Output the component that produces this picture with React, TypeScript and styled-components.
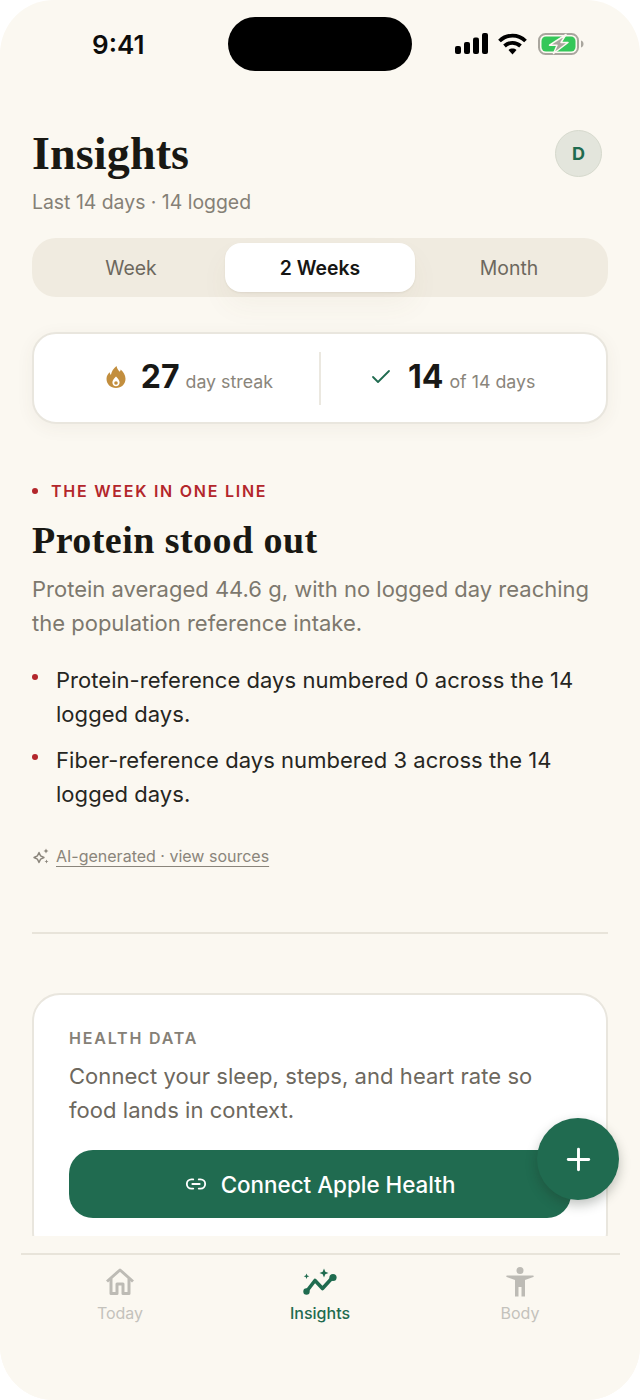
import React from 'react';
import styled, { createGlobalStyle } from 'styled-components';
import { Check, Link2, Plus } from 'lucide-react';

const GlobalStyle = createGlobalStyle`
  html, body {
    margin: 0;
    padding: 0;
    background: #fff;
  }
  * {
    box-sizing: border-box;
  }
`;

const Screen = styled.div`
  position: relative;
  width: 640px;
  height: 1400px;
  border-radius: 54px;
  overflow: hidden;
  background: #fbf8f1;
  display: flex;
  flex-direction: column;
  font-family: Inter, 'Liberation Sans', sans-serif;
  color: #1a1a18;
`;

const StatusBar = styled.div`
  flex: none;
  height: 71px;
  padding-top: 17px;
  display: grid;
  grid-template-columns: 228px 184px 228px;
`;

const Clock = styled.div`
  font-size: 26px;
  font-weight: 600;
  line-height: 56px;
  padding-left: 92px;
  color: #0c0c0b;
`;

const Island = styled.div`
  height: 54px;
  border-radius: 27px;
  background: #000;
`;

const StatusIcons = styled.div`
  display: flex;
  align-items: center;
  gap: 10px;
  padding-left: 43px;
  height: 54px;
`;

const Content = styled.div`
  flex: 1;
  min-height: 0;
  overflow: hidden;
  padding: 58px 32px 0;
`;

const Header = styled.div`
  display: flex;
  justify-content: space-between;
  align-items: flex-start;
`;

const Title = styled.h1`
  margin: 0;
  font-family: 'Liberation Serif', serif;
  font-size: 46px;
  line-height: 50px;
  font-weight: 700;
  letter-spacing: 0.15px;
  color: #191813;
`;

const Avatar = styled.div`
  width: 47px;
  height: 47px;
  margin: 1px 6px 0 0;
  border-radius: 50%;
  background: #e3e5dc;
  border: 1px solid #d6d9cd;
  color: #1f6b4f;
  font-size: 18px;
  font-weight: 700;
  display: flex;
  align-items: center;
  justify-content: center;
`;

const Subtitle = styled.div`
  margin-top: 9px;
  font-size: 19.4px;
  line-height: 28px;
  color: #858076;
`;

const Segments = styled.div`
  margin-top: 22px;
  height: 59px;
  padding: 5px;
  border-radius: 24px;
  background: #f0ebe0;
  display: grid;
  grid-template-columns: 1fr 190px 1fr;
`;

const Segment = styled.div<{ $active?: boolean }>`
  display: flex;
  align-items: center;
  justify-content: center;
  border-radius: 16px;
  font-size: 19.4px;
  font-weight: ${(p) => (p.$active ? 600 : 400)};
  color: ${(p) => (p.$active ? '#161614' : '#6d685e')};
  background: ${(p) => (p.$active ? '#fff' : 'transparent')};
  box-shadow: ${(p) => (p.$active ? '0 1px 2px rgba(60,50,30,.08), 0 14px 28px rgba(120,90,50,.05)' : 'none')};
`;

const StatsCard = styled.div`
  margin-top: 35px;
  height: 92px;
  background: #fff;
  border: 2px solid #e9e6de;
  border-radius: 24px;
  box-shadow: 0 4px 18px rgba(90, 75, 45, 0.06);
  display: grid;
  grid-template-columns: 1fr 2px 1fr;
  align-items: center;
`;

const Stat = styled.div<{ $side: 'left' | 'right' }>`
  display: flex;
  align-items: baseline;
  justify-content: ${(p) => (p.$side === 'left' ? 'flex-end' : 'flex-start')};
  padding: ${(p) => (p.$side === 'left' ? '0 46px 3px 0' : '0 0 3px 48px')};
  color: #8a857b;
  font-size: 17.8px;
`;

const StatIcon = styled.span`
  align-self: center;
  display: flex;
  margin-right: 15px;
`;

const StatNumber = styled.span`
  font-size: 32px;
  font-weight: 700;
  color: #181816;
  margin-right: 6px;
`;

const StatDivider = styled.div`
  height: 53px;
  background: #ebe8e0;
`;

const Eyebrow = styled.div`
  margin-top: 57px;
  display: flex;
  align-items: center;
  gap: 13px;
  height: 20px;
  font-size: 16px;
  font-weight: 600;
  letter-spacing: 1.75px;
  color: #b3262b;
  &::before {
    content: '';
    width: 6px;
    height: 6px;
    border-radius: 50%;
    background: #b3262b;
  }
`;

const Headline = styled.h2`
  margin: 17px 0 0;
  font-family: 'Liberation Serif', serif;
  font-size: 38px;
  line-height: 44px;
  font-weight: 700;
  letter-spacing: 0.45px;
  color: #191813;
`;

const Body = styled.p`
  margin: 10px 0 0;
  font-size: 22px;
  line-height: 34px;
  color: #7d786e;
`;

const Bullets = styled.ul`
  margin: 23px 0 0;
  padding: 0;
  list-style: none;
  display: flex;
  flex-direction: column;
  gap: 12px;
`;

const Bullet = styled.li`
  position: relative;
  padding-left: 24px;
  font-size: 22px;
  line-height: 34px;
  letter-spacing: 0.04px;
  color: #26261f;
  &::before {
    content: '';
    position: absolute;
    left: 0;
    top: 11px;
    width: 6px;
    height: 6px;
    border-radius: 50%;
    background: #b3262b;
  }
`;

const Sources = styled.div`
  margin-top: 33px;
  display: flex;
  align-items: center;
  gap: 6px;
  height: 24px;
  font-size: 16px;
  color: #8a857b;
  span {
    text-decoration: underline;
    text-underline-offset: 4px;
    text-decoration-thickness: 1px;
  }
`;

const Rule = styled.div`
  margin-top: 64px;
  height: 2px;
  background: #e8e4da;
`;

const HealthCard = styled.div`
  margin-top: 59px;
  padding: 31px 35px 40px;
  background: #fff;
  border: 2px solid #e9e6de;
  border-radius: 28px;
`;

const CardLabel = styled.div`
  font-size: 16px;
  line-height: 24px;
  font-weight: 600;
  letter-spacing: 1.8px;
  color: #858076;
`;

const CardText = styled.p`
  margin: 9px 0 0;
  font-size: 22px;
  line-height: 34px;
  letter-spacing: 0.05px;
  color: #6d685e;
`;

const ConnectButton = styled.div`
  margin-top: 23px;
  height: 68px;
  border-radius: 24px;
  background: #206b50;
  color: #fff;
  font-size: 22.4px;
  font-weight: 500;
  display: flex;
  align-items: center;
  justify-content: center;
  gap: 14px;
`;

const Fab = styled.div`
  position: absolute;
  left: 537px;
  top: 1118px;
  width: 82px;
  height: 82px;
  border-radius: 50%;
  background: #206b50;
  color: #fff;
  display: flex;
  align-items: center;
  justify-content: center;
  box-shadow: 0 5px 12px rgba(30, 40, 30, 0.28);
`;

const NavArea = styled.div`
  flex: none;
  height: 164px;
  padding: 17px 20px 0 21px;
  background: #fbf8f1;
`;

const Nav = styled.div`
  border-top: 2px solid #e8e4da;
  padding-top: 11px;
  display: grid;
  grid-template-columns: 198px 202px 198px;
`;

const NavItem = styled.div<{ $active?: boolean }>`
  display: flex;
  flex-direction: column;
  align-items: center;
  gap: 3px;
  font-size: 16px;
  line-height: 24px;
  font-weight: ${(p) => (p.$active ? 500 : 400)};
  color: ${(p) => (p.$active ? '#1f6b4f' : '#c4c2bc')};
`;

const NavIcon = styled.div`
  height: 32px;
  display: flex;
  align-items: center;
  justify-content: center;
`;

const Signal = () => (
  <svg width="33" height="22" viewBox="0 0 33 22" fill="#000">
    <rect x="0" y="13" width="6" height="8" rx="2" />
    <rect x="9" y="9" width="6" height="12" rx="2" />
    <rect x="18" y="4.500" width="6" height="16.500" rx="2" />
    <rect x="27" y="0" width="6" height="21" rx="2" />
  </svg>
);

const Wifi = () => (
  <svg width="29" height="22" viewBox="0 0 29 22" fill="none" stroke="#000" strokeWidth="3.800">
    <path d="M1.500 8C8.800 .8 20.200 .8 27.500 8" />
    <path d="M6.500 13c4.600-4.300 11.400-4.300 16 0" />
    <path d="M14.500 21.500l-4-4.600c2.300-1.800 5.700-1.800 8 0z" fill="#000" stroke="none" />
  </svg>
);

const Battery = () => (
  <svg width="47" height="22" viewBox="0 0 47 22">
    <rect x="2" y="1" width="39" height="20" rx="6.500" fill="none" stroke="#a9a69e" strokeWidth="2" />
    <rect x="4.500" y="3.500" width="34" height="15" rx="4.500" fill="#34c759" />
    <path d="M44 7.500c1.600.5 2.500 1.800 2.500 3.500s-.9 3-2.500 3.500z" fill="#a9a69e" />
    <path d="M29 1.500L12.500 12.200h7.500L16.500 20.500 31 9.500h-7z" fill="#a9a69e" stroke="#fbf8f1" strokeWidth="1.500" strokeLinejoin="round" />
  </svg>
);

const Flame = () => (
  <svg width="20" height="24" viewBox="0 0 20 24">
    <path
      fillRule="evenodd"
      d="M10.500 1c.6 3.200 2 4.400 3.300 5.800.5-.7.8-1.400.9-2.300 2.800 2.500 4.800 5.800 4.800 9.300C19.500 19.300 15.400 23 10 23S.5 19.300.5 13.800c0-3 1.600-5 3.200-6.600.1 1.200.5 2 1.200 2.700C5.500 6.600 7.500 3.400 10.500 1zM10 11.500c-2 2.200-3.600 4-3.600 6 0 2.100 1.600 3.700 3.600 3.700s3.600-1.600 3.600-3.700c0-2-1.600-3.800-3.600-6z"
      fill="#c28e3e"
    />
    <circle cx="10" cy="18" r="1.800" fill="#c28e3e" />
  </svg>
);

const Sparkle = () => (
  <svg width="18" height="18" viewBox="0 0 18 18" fill="none" stroke="#8a857b" strokeWidth="1.400" strokeLinejoin="round">
    <path d="M7 5.500l1.600 3.400L12 10.500l-3.400 1.600L7 15.500l-1.600-3.400L2 10.500l3.400-1.600z" />
    <path d="M14 1.500l.8 1.700 1.700.8-1.700.8-.8 1.700-.8-1.700-1.700-.8 1.700-.8z" fill="#8a857b" stroke="none" />
    <path d="M14.500 12.500l.6 1.400 1.400.6-1.400.6-.6 1.400-.6-1.400-1.400-.6 1.400-.6z" fill="#8a857b" stroke="none" />
  </svg>
);

const HomeIcon = () => (
  <svg width="30" height="28" viewBox="0 0 30 28" fill="none" stroke="#bdbbb5" strokeWidth="3" strokeLinejoin="round">
    <path d="M2 13.500L15 2l13 11.500" />
    <path d="M6 10.500V25.500h6V16h6v9.500h6V10.500" />
  </svg>
);

const InsightsIcon = () => (
  <svg width="36" height="28" viewBox="0 0 36 28" fill="none">
    <path d="M4.500 23.500L13 12.500l7.500 8L31 9" stroke="#1f6b4f" strokeWidth="3.600" strokeLinecap="round" strokeLinejoin="round" />
    <circle cx="4.500" cy="23.500" r="3.200" fill="#1f6b4f" />
    <circle cx="31" cy="9.500" r="3.600" fill="#1f6b4f" />
    <path d="M22 0.500l1.300 3.200 3.200 1.300-3.200 1.300L22 9.500l-1.300-3.200L17.500 5l3.200-1.300z" fill="#1f6b4f" />
    <path d="M4.500 5.500l.8 2 2 .8-2 .8-.8 2-.8-2-2-.8 2-.8z" fill="#1f6b4f" />
  </svg>
);

const BodyIcon = () => (
  <svg width="28" height="30" viewBox="0 0 28 30" fill="#bdbbb5">
    <circle cx="14" cy="3.500" r="3.500" />
    <path d="M1 8.500h26c.8 0 1 1 .3 1.400L19 13v16.500h-3.500V20h-3v9.500H9V13L.7 9.900C0 9.500.2 8.500 1 8.500z" />
  </svg>
);

const App: React.FC = () => (
  <>
    <GlobalStyle />
    <Screen>
      <StatusBar>
        <Clock>9:41</Clock>
        <Island />
        <StatusIcons>
          <Signal />
          <Wifi />
          <Battery />
        </StatusIcons>
      </StatusBar>
      <Content>
        <Header>
          <Title>Insights</Title>
          <Avatar>D</Avatar>
        </Header>
        <Subtitle>Last 14 days · 14 logged</Subtitle>
        <Segments>
          <Segment>Week</Segment>
          <Segment $active>2 Weeks</Segment>
          <Segment>Month</Segment>
        </Segments>
        <StatsCard>
          <Stat $side="left">
            <StatIcon>
              <Flame />
            </StatIcon>
            <StatNumber>27</StatNumber>
            day streak
          </Stat>
          <StatDivider />
          <Stat $side="right">
            <StatIcon>
              <Check size={24} color="#206b50" strokeWidth={1.8} />
            </StatIcon>
            <StatNumber>14</StatNumber>
            of 14 days
          </Stat>
        </StatsCard>
        <Eyebrow>THE WEEK IN ONE LINE</Eyebrow>
        <Headline>Protein stood out</Headline>
        <Body>Protein averaged 44.6 g, with no logged day reaching the population reference intake.</Body>
        <Bullets>
          <Bullet>Protein-reference days numbered 0 across the 14 logged days.</Bullet>
          <Bullet>Fiber-reference days numbered 3 across the 14 logged days.</Bullet>
        </Bullets>
        <Sources>
          <Sparkle />
          <span>AI-generated · view sources</span>
        </Sources>
        <Rule />
        <HealthCard>
          <CardLabel>HEALTH DATA</CardLabel>
          <CardText>Connect your sleep, steps, and heart rate so food lands in context.</CardText>
          <ConnectButton>
            <Link2 size={22} strokeWidth={2} />
            Connect Apple Health
          </ConnectButton>
        </HealthCard>
      </Content>
      <NavArea>
        <Nav>
          <NavItem>
            <NavIcon>
              <HomeIcon />
            </NavIcon>
            Today
          </NavItem>
          <NavItem $active>
            <NavIcon>
              <InsightsIcon />
            </NavIcon>
            Insights
          </NavItem>
          <NavItem>
            <NavIcon>
              <BodyIcon />
            </NavIcon>
            Body
          </NavItem>
        </Nav>
      </NavArea>
      <Fab>
        <Plus size={35} strokeWidth={2} />
      </Fab>
    </Screen>
  </>
);

export default App;
